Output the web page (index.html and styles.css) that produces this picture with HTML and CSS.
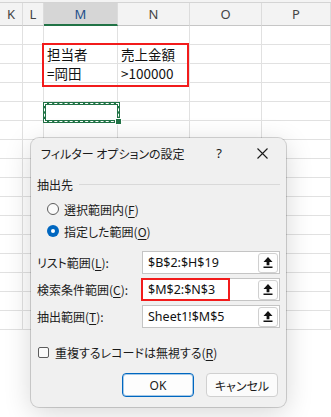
FILE: index.html
```html
<!DOCTYPE html>
<html lang="ja">
<head>
    <meta charset="UTF-8">
    <title>フィルター オプションの設定</title>
    <link rel="stylesheet" href="styles.css">
</head>
<body>
    <div class="top-strip"></div>

    <div class="sheet">
        <div class="col-head">K</div>
        <div class="col-head">L</div>
        <div class="col-head active">M</div>
        <div class="col-head">N</div>
        <div class="col-head">O</div>
        <div class="col-head">P</div>

        <!-- row 1 -->
        <div class="cell"></div><div class="cell"></div><div class="cell"></div><div class="cell"></div><div class="cell"></div><div class="cell"></div>
        <!-- row 2 -->
        <div class="cell"></div><div class="cell"></div><div class="cell">担当者</div><div class="cell">売上金額</div><div class="cell"></div><div class="cell"></div>
        <!-- row 3 -->
        <div class="cell"></div><div class="cell"></div><div class="cell">=岡田</div><div class="cell">&gt;100000</div><div class="cell"></div><div class="cell"></div>
        <!-- row 4 -->
        <div class="cell"></div><div class="cell"></div><div class="cell"></div><div class="cell"></div><div class="cell"></div><div class="cell"></div>
        <!-- row 5 -->
        <div class="cell"></div><div class="cell"></div><div class="cell"></div><div class="cell"></div><div class="cell"></div><div class="cell"></div>
        <!-- rows 6 - 16 -->
        <div class="cell"></div><div class="cell"></div><div class="cell"></div><div class="cell"></div><div class="cell"></div><div class="cell"></div>
        <div class="cell"></div><div class="cell"></div><div class="cell"></div><div class="cell"></div><div class="cell"></div><div class="cell"></div>
        <div class="cell"></div><div class="cell"></div><div class="cell"></div><div class="cell"></div><div class="cell"></div><div class="cell"></div>
        <div class="cell"></div><div class="cell"></div><div class="cell"></div><div class="cell"></div><div class="cell"></div><div class="cell"></div>
        <div class="cell"></div><div class="cell"></div><div class="cell"></div><div class="cell"></div><div class="cell"></div><div class="cell"></div>
        <div class="cell"></div><div class="cell"></div><div class="cell"></div><div class="cell"></div><div class="cell"></div><div class="cell"></div>
        <div class="cell"></div><div class="cell"></div><div class="cell"></div><div class="cell"></div><div class="cell"></div><div class="cell"></div>
        <div class="cell"></div><div class="cell"></div><div class="cell"></div><div class="cell"></div><div class="cell"></div><div class="cell"></div>
        <div class="cell"></div><div class="cell"></div><div class="cell"></div><div class="cell"></div><div class="cell"></div><div class="cell"></div>
        <div class="cell"></div><div class="cell"></div><div class="cell"></div><div class="cell"></div><div class="cell"></div><div class="cell"></div>
        <div class="cell"></div><div class="cell"></div><div class="cell"></div><div class="cell"></div><div class="cell"></div><div class="cell"></div>

        <!-- overlays: criteria range highlight and copy marquee -->
        <div class="criteria-mark"></div>
        <div class="copy-marquee"><span class="handle"></span></div>
    </div>

    <div class="dialog">
        <div class="dialog-title">
            <span class="title-text">フィルター オプションの設定</span>
            <span class="title-help">?</span>
            <svg class="title-close" width="11" height="11" viewBox="0 0 11 11">
                <path d="M0.5 0.5 L10.5 10.5 M10.5 0.5 L0.5 10.5" stroke="#1a1a1a" stroke-width="1.1" fill="none"/>
            </svg>
        </div>

        <div class="group-label">
            <span>抽出先</span>
            <span class="group-line"></span>
        </div>

        <label class="radio-row">
            <span class="radio"></span>
            <span>選択範囲内(<u>F</u>)</span>
        </label>
        <label class="radio-row">
            <span class="radio checked"></span>
            <span>指定した範囲(<u>O</u>)</span>
        </label>

        <div class="fields">
            <div class="field">
                <span class="field-label">リスト範囲(<u>L</u>):</span>
                <div class="field-input">
                    <span class="field-value">$B$2:$H$19</span>
                    <span class="pick-btn">
                        <svg width="10" height="11" viewBox="0 0 10 11"><path d="M5 0 L9.5 5 H6.4 V8.2 H3.6 V5 H0.5 Z M0.5 9.5 H9.5 V11 H0.5 Z" fill="#111"/></svg>
                    </span>
                </div>
            </div>
            <div class="field">
                <span class="field-label">検索条件範囲(<u>C</u>):</span>
                <div class="field-input">
                    <span class="field-value">$M$2:$N$3</span>
                    <span class="pick-btn">
                        <svg width="10" height="11" viewBox="0 0 10 11"><path d="M5 0 L9.5 5 H6.4 V8.2 H3.6 V5 H0.5 Z M0.5 9.5 H9.5 V11 H0.5 Z" fill="#111"/></svg>
                    </span>
                    <span class="value-mark"></span>
                </div>
            </div>
            <div class="field">
                <span class="field-label">抽出範囲(<u>T</u>):</span>
                <div class="field-input">
                    <span class="field-value">Sheet1!$M$5</span>
                    <span class="pick-btn">
                        <svg width="10" height="11" viewBox="0 0 10 11"><path d="M5 0 L9.5 5 H6.4 V8.2 H3.6 V5 H0.5 Z M0.5 9.5 H9.5 V11 H0.5 Z" fill="#111"/></svg>
                    </span>
                </div>
            </div>
        </div>

        <label class="check-row">
            <span class="checkbox"></span>
            <span>重複するレコードは無視する(<u>R</u>)</span>
        </label>

        <div class="buttons">
            <button class="btn primary">OK</button>
            <button class="btn">キャンセル</button>
        </div>
    </div>
</body>
</html>
```

FILE: styles.css
```css
body {
    margin: 0;
    background: #ffffff;
    font-family: "Noto Sans", "Noto Sans CJK JP", sans-serif;
    color: #1a1a1a;
    overflow: hidden;
    width: 331px;
    height: 417px;
    position: relative;
}

.top-strip {
    height: 2px;
    background: #f3f3f3;
    border-bottom: 1px solid #d4d4d4;
}

/* spreadsheet */

.sheet {
    display: grid;
    grid-template-columns: 23px 21px 74px 72px 72px 69px;
    grid-template-rows: 23px repeat(16, 19px);
    position: relative;
}

.col-head {
    background: #f3f3f3;
    border-right: 1px solid #dcdcdc;
    border-bottom: 1px solid #c6c6c6;
    display: flex;
    align-items: center;
    justify-content: center;
    font-size: 13px;
    color: #444;
    box-sizing: border-box;
}

.col-head.active {
    background-color: #d6d6d6;
    background-image: radial-gradient(#c9c9c9 0.6px, transparent 0.7px);
    background-size: 2px 2px;
    border-bottom: 2px solid #217346;
    color: #1e4f8a;
}

.cell {
    border-right: 1px solid #e1e1e1;
    border-bottom: 1px solid #e1e1e1;
    box-sizing: border-box;
    font-family: "Noto Sans CJK JP", sans-serif;
    font-feature-settings: "palt";
    font-size: 13.5px;
    line-height: 18px;
    padding-left: 3px;
    color: #111;
    white-space: nowrap;
}

.criteria-mark {
    position: absolute;
    left: 42px;
    top: 40px;
    width: 147px;
    height: 44px;
    box-sizing: border-box;
    border: 2px solid #f21b1b;
}

.copy-marquee {
    position: absolute;
    left: 43px;
    top: 99px;
    width: 77px;
    height: 21px;
    box-sizing: border-box;
    border: 3px solid #217346;
}

.copy-marquee::before {
    content: "";
    position: absolute;
    inset: -2px;
    border: 1px dashed #ffffff;
}

.copy-marquee .handle {
    position: absolute;
    right: -5px;
    bottom: -5px;
    width: 5px;
    height: 5px;
    background: #217346;
    border: 1px solid #fff;
}

/* dialog */

.dialog {
    position: absolute;
    left: 31px;
    top: 138px;
    width: 255px;
    height: 269px;
    box-sizing: border-box;
    background: #f0f0f0;
    border-radius: 8px;
    box-shadow: 0 0 0 1px rgba(0, 0, 0, 0.16), 0 6px 28px rgba(0, 0, 0, 0.16);
    padding: 0 6px 10px 6px;
    display: flex;
    flex-direction: column;
    font-family: "Noto Sans CJK JP", sans-serif;
    font-feature-settings: "palt";
    font-size: 12px;
    color: #1a1a1a;
}

.dialog u {
    text-underline-offset: 2px;
}

.dialog-title {
    height: 30px;
    display: flex;
    align-items: center;
    padding-left: 4px;
}

.title-text {
    flex: 1;
    font-size: 12px;
}

.title-help {
    font-family: "Noto Sans", sans-serif;
    font-size: 13px;
    margin-right: 35px;
}

.title-close {
    margin-right: 12px;
}

.group-label {
    margin-top: 8px;
    height: 16px;
    display: flex;
    align-items: center;
}

.group-line {
    flex: 1;
    height: 1px;
    background: #d9d9d9;
    margin-left: 6px;
}

.radio-row {
    height: 22px;
    display: flex;
    align-items: center;
    padding-left: 10px;
}

.radio-row:first-of-type {
    margin-top: 6px;
}

.radio {
    width: 12px;
    height: 12px;
    box-sizing: border-box;
    border-radius: 50%;
    border: 1px solid #5c5c5c;
    background: #fafafa;
    margin-right: 5px;
    position: relative;
}

.radio.checked {
    border: none;
    background: #0067c0;
}

.radio.checked::after {
    content: "";
    position: absolute;
    left: 4px;
    top: 4px;
    width: 4px;
    height: 4px;
    border-radius: 50%;
    background: #fff;
}

.fields {
    margin-top: 9px;
    display: flex;
    flex-direction: column;
    gap: 4px;
}

.field {
    height: 23px;
    display: flex;
    align-items: center;
}

.field-label {
    width: 105px;
}

.field-input {
    flex: 1;
    height: 23px;
    box-sizing: border-box;
    background: #fff;
    border: 1px solid #c4c4c4;
    display: flex;
    align-items: center;
    padding: 0 1px 0 5px;
    position: relative;
}

.field-value {
    flex: 1;
    font-family: "Noto Sans", sans-serif;
    font-size: 12.5px;
    color: #111;
}

.pick-btn {
    width: 20px;
    height: 20px;
    box-sizing: border-box;
    border: 1px solid #d0d0d0;
    border-radius: 3px;
    background: #fdfdfd;
    display: flex;
    align-items: center;
    justify-content: center;
}

.value-mark {
    position: absolute;
    left: -2px;
    top: -1px;
    width: 89px;
    height: 23px;
    box-sizing: border-box;
    border: 2px solid #f21b1b;
}

.check-row {
    margin-top: 14px;
    height: 20px;
    display: flex;
    align-items: center;
    padding-left: 1px;
}

.checkbox {
    width: 11px;
    height: 11px;
    box-sizing: border-box;
    border: 1px solid #5c5c5c;
    border-radius: 2px;
    background: #fafafa;
    margin-right: 6px;
}

.buttons {
    margin-top: 11px;
    display: flex;
    justify-content: flex-end;
    gap: 12px;
    padding-right: 2px;
}

.btn {
    width: 72px;
    height: 24px;
    box-sizing: border-box;
    border: 1px solid #d0d0d0;
    border-radius: 4px;
    background: #fbfbfb;
    font-family: "Noto Sans CJK JP", sans-serif;
    font-feature-settings: "palt";
    font-size: 12px;
    color: #1a1a1a;
    padding: 0;
}

.btn.primary {
    border-color: #0067c0;
    box-shadow: inset 0 0 0 1px rgba(0, 103, 192, 0.35);
    background: #fdfdfd;
    font-family: "Noto Sans", sans-serif;
}
```
